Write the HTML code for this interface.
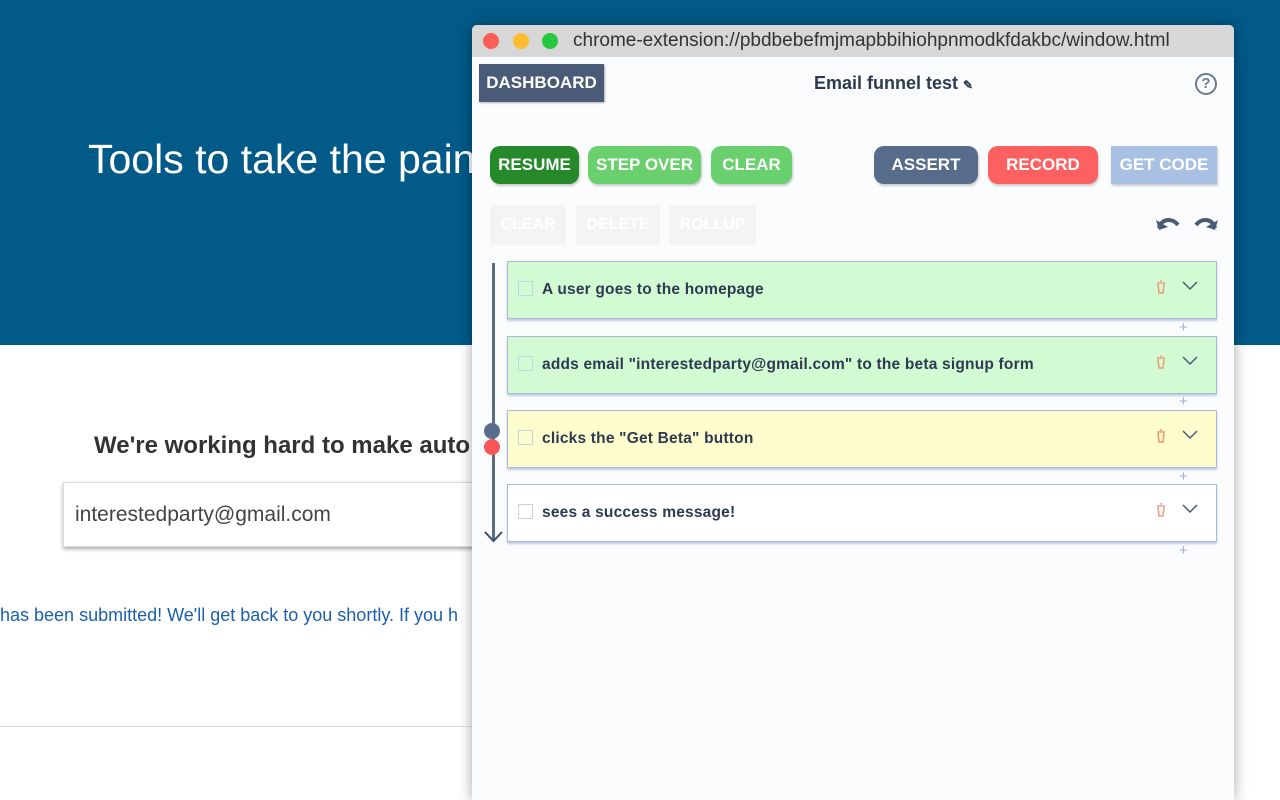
<!DOCTYPE html>
<html><head><meta charset="utf-8"><style>
*{margin:0;padding:0;box-sizing:border-box}
body{width:1280px;height:800px;overflow:hidden;position:relative;background:#fff;font-family:"Liberation Sans",sans-serif}
.hdr{position:absolute;left:0;top:0;width:1280px;height:345px;background:#015a88}
.abs{position:absolute;white-space:nowrap}
.n{font-family:"Liberation Sans Narrow","Liberation Sans",sans-serif;font-weight:bold}
.win{position:absolute;left:472px;top:25px;width:762px;height:775px;background:#fbfcfe;box-shadow:0 0 14px rgba(0,0,0,.35);border-radius:5px 5px 0 0;overflow:hidden}
.tb{height:32px;background:#d7d7d7;position:relative}
.dot{position:absolute;top:8px;width:16px;height:16px;border-radius:50%}
.btn{position:absolute;height:38px;border-radius:10px;color:#fff;font-size:17px;text-align:center;line-height:38px;box-shadow:1px 2px 2px rgba(0,0,0,.2)}
.gb{position:absolute;top:180px;height:40px;background:#f3f4f6;color:#fff;font-size:16px;line-height:40px;text-align:center}
.step{position:absolute;left:35px;width:710px;height:58px;border:1px solid #aab8dd;box-shadow:0 2px 2px rgba(90,110,160,.35)}
.step .cb{position:absolute;left:10px;top:19px;width:15px;height:15px;border:1px solid #c9d2df}
.step .t{position:absolute;left:34px;top:19px;font-size:15.5px;color:#2d3a4f;letter-spacing:.2px}
.step .tr{position:absolute;left:648px;top:18px;width:10px;height:14px}
.step .ch{position:absolute;left:674px;top:19px}
.plus{position:absolute;left:707px;color:#9cb0d8;font-size:15px}
</style></head><body>
<div class="hdr"></div>
<div class="abs" style="left:88px;top:136px;font-size:41px;color:#fff;font-weight:300">Tools to take the pain</div>
<div class="abs" style="left:94px;top:432px;font-size:24px;font-weight:bold;color:#333">We're working hard to make auto</div>
<div class="abs" style="left:63px;top:482px;width:420px;height:65px;border:1px solid #ddd;box-shadow:0 2px 4px rgba(0,0,0,.35);padding:20px 11px;font-size:21px;color:#444">interestedparty@gmail.com</div>
<div class="abs" style="left:0;top:605px;font-size:18px;color:#1b5fae">has been submitted! We'll get back to you shortly. If you h</div>
<div class="abs" style="left:0;top:726px;width:480px;height:1px;background:#ddd"></div>

<div class="win">
<div class="tb">
<div class="dot" style="left:11px;background:#fd5d57"></div>
<div class="dot" style="left:41px;background:#fdbb2e"></div>
<div class="dot" style="left:70px;background:#27c73f"></div>
<div class="abs" style="left:101px;top:5px;font-size:19px;color:#333">chrome-extension://pbdbebefmjmapbbihiohpnmodkfdakbc/window.html</div>
</div>
<div class="abs n" style="left:7px;top:39px;width:125px;height:38px;background:#4a5b78;color:#fff;font-size:17px;line-height:38px;text-align:center;box-shadow:1px 1px 2px rgba(0,0,0,.3)">DASHBOARD</div>
<div class="abs n" style="left:342px;top:48px;font-size:18px;color:#2d3a4f">Email funnel test <span style="font-size:12px">&#9998;</span></div>
<div class="abs" style="left:723px;top:48px;width:22px;height:22px;border:2px solid #6b7a90;border-radius:50%;text-align:center;font-size:15px;line-height:18px;color:#6b7a90;font-weight:bold">?</div>
<div class="btn n" style="left:18px;top:121px;width:89px;background:#268a2a">RESUME</div>
<div class="btn n" style="left:116px;top:121px;width:113px;background:#6ad06e">STEP OVER</div>
<div class="btn n" style="left:239px;top:121px;width:81px;background:#6ad06e">CLEAR</div>
<div class="btn n" style="left:402px;top:121px;width:104px;background:#576b8a">ASSERT</div>
<div class="btn n" style="left:516px;top:121px;width:110px;background:#fd6060">RECORD</div>
<div class="btn n" style="left:639px;top:121px;width:106px;background:#a8c0e2;border-radius:0">GET CODE</div>
<div class="gb n" style="left:18px;width:76px">CLEAR</div>
<div class="gb n" style="left:104px;width:84px">DELETE</div>
<div class="gb n" style="left:197px;width:87px">ROLLUP</div>
<svg class="abs" style="left:684px;top:189px" width="62" height="18" viewBox="0 0 62 18"><path d="M3 14C5 5 16 3 22 11" fill="none" stroke="#4a5b78" stroke-width="4"/><path d="M0 6l3 10 9-3z" fill="#4a5b78"/><path d="M59 14C57 5 46 3 40 11" fill="none" stroke="#4a5b78" stroke-width="4"/><path d="M62 6l-3 10-9-3z" fill="#4a5b78"/></svg>
<div class="abs" style="left:20px;top:238px;width:3px;height:278px;background:#5a6c8c"></div>
<svg class="abs" style="left:12px;top:506px" width="19" height="12"><path d="M1 1l8.5 9 8.5-9" fill="none" stroke="#3f4f6a" stroke-width="2"/></svg>
<div class="abs" style="left:12px;top:398px;width:16px;height:16px;border-radius:50%;background:#5a6c8c"></div>
<div class="abs" style="left:12px;top:414px;width:16px;height:16px;border-radius:50%;background:#fb5757"></div>

<div class="step" style="top:236px;background:#d3fbd3"><div class="cb"></div><div class="t n">A user goes to the homepage</div><svg class="tr" viewBox="0 0 10 14"><path d="M1 3h8M4 1h2M2 4l1 9h4l1-9" fill="none" stroke="#e9a27a" stroke-width="1.6"/></svg><svg class="ch" width="16" height="10"><path d="M1 1l7 7 7-7" fill="none" stroke="#4a5b78" stroke-width="1.5"/></svg></div>
<div class="plus" style="top:294px">+</div>
<div class="step" style="top:311px;background:#d3fbd3"><div class="cb"></div><div class="t n">adds email "interestedparty@gmail.com" to the beta signup form</div><svg class="tr" viewBox="0 0 10 14"><path d="M1 3h8M4 1h2M2 4l1 9h4l1-9" fill="none" stroke="#e9a27a" stroke-width="1.6"/></svg><svg class="ch" width="16" height="10"><path d="M1 1l7 7 7-7" fill="none" stroke="#4a5b78" stroke-width="1.5"/></svg></div>
<div class="plus" style="top:368px">+</div>
<div class="step" style="top:385px;background:#fefdcd"><div class="cb"></div><div class="t n">clicks the "Get Beta" button</div><svg class="tr" viewBox="0 0 10 14"><path d="M1 3h8M4 1h2M2 4l1 9h4l1-9" fill="none" stroke="#f0986a" stroke-width="1.6"/></svg><svg class="ch" width="16" height="10"><path d="M1 1l7 7 7-7" fill="none" stroke="#4a5b78" stroke-width="1.5"/></svg></div>
<div class="plus" style="top:443px">+</div>
<div class="step" style="top:459px;background:#fff"><div class="cb"></div><div class="t n">sees a success message!</div><svg class="tr" viewBox="0 0 10 14"><path d="M1 3h8M4 1h2M2 4l1 9h4l1-9" fill="none" stroke="#f0a08a" stroke-width="1.6"/></svg><svg class="ch" width="16" height="10"><path d="M1 1l7 7 7-7" fill="none" stroke="#4a5b78" stroke-width="1.5"/></svg></div>
<div class="plus" style="top:517px">+</div>
</div>
</body></html>
